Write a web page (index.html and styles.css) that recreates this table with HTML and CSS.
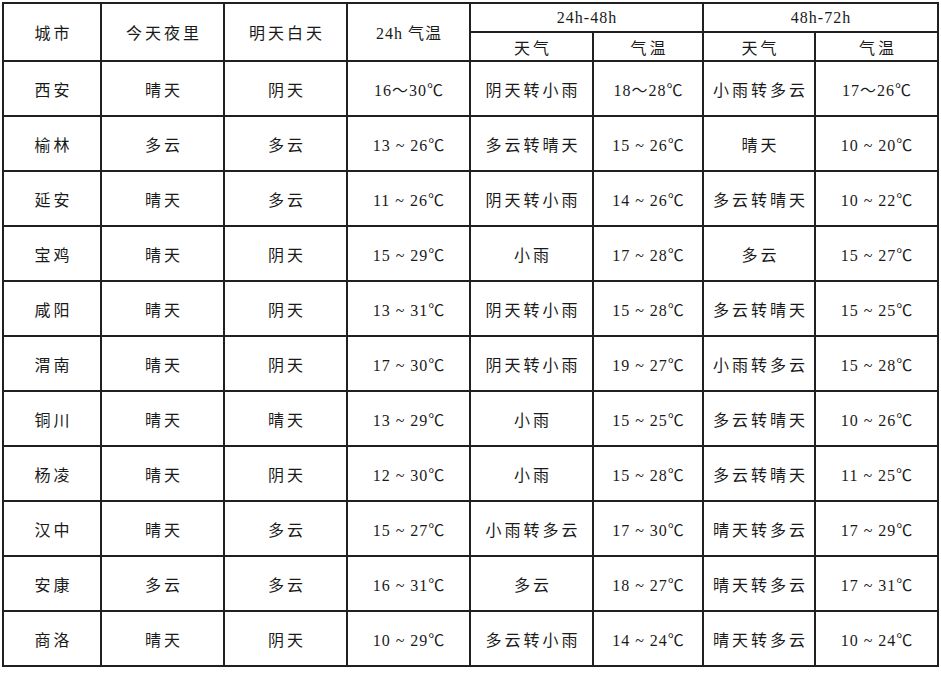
FILE: index.html
```html
<!DOCTYPE html>
<html lang="zh">
<head>
<meta charset="utf-8">
<title>陕西天气预报</title>
<link rel="stylesheet" href="styles.css">
</head>
<body>
<div class="wrap">
<table class="fc">
  <colgroup>
    <col class="c-city">
    <col class="c-w">
    <col class="c-w">
    <col class="c-w">
    <col class="c-w">
    <col class="c-t">
    <col class="c-w2">
    <col class="c-w3">
  </colgroup>
  <thead>
    <tr class="h1">
      <th rowspan="2">城市</th>
      <th rowspan="2">今天夜里</th>
      <th rowspan="2">明天白天</th>
      <th rowspan="2" class="num">24h 气温</th>
      <th colspan="2" class="num">24h-48h</th>
      <th colspan="2" class="num">48h-72h</th>
    </tr>
    <tr class="h2">
      <th>天气</th>
      <th>气温</th>
      <th>天气</th>
      <th>气温</th>
    </tr>
  </thead>
  <tbody>
    <tr><td>西安</td><td>晴天</td><td>阴天</td><td class="num">16～30℃</td><td>阴天转小雨</td><td class="num">18～28℃</td><td>小雨转多云</td><td class="num">17～26℃</td></tr>
    <tr><td>榆林</td><td>多云</td><td>多云</td><td class="num">13 ~ 26℃</td><td>多云转晴天</td><td class="num">15 ~ 26℃</td><td>晴天</td><td class="num">10 ~ 20℃</td></tr>
    <tr><td>延安</td><td>晴天</td><td>多云</td><td class="num">11 ~ 26℃</td><td>阴天转小雨</td><td class="num">14 ~ 26℃</td><td>多云转晴天</td><td class="num">10 ~ 22℃</td></tr>
    <tr><td>宝鸡</td><td>晴天</td><td>阴天</td><td class="num">15 ~ 29℃</td><td>小雨</td><td class="num">17 ~ 28℃</td><td>多云</td><td class="num">15 ~ 27℃</td></tr>
    <tr><td>咸阳</td><td>晴天</td><td>阴天</td><td class="num">13 ~ 31℃</td><td>阴天转小雨</td><td class="num">15 ~ 28℃</td><td>多云转晴天</td><td class="num">15 ~ 25℃</td></tr>
    <tr><td>渭南</td><td>晴天</td><td>阴天</td><td class="num">17 ~ 30℃</td><td>阴天转小雨</td><td class="num">19 ~ 27℃</td><td>小雨转多云</td><td class="num">15 ~ 28℃</td></tr>
    <tr><td>铜川</td><td>晴天</td><td>晴天</td><td class="num">13 ~ 29℃</td><td>小雨</td><td class="num">15 ~ 25℃</td><td>多云转晴天</td><td class="num">10 ~ 26℃</td></tr>
    <tr><td>杨凌</td><td>晴天</td><td>阴天</td><td class="num">12 ~ 30℃</td><td>小雨</td><td class="num">15 ~ 28℃</td><td>多云转晴天</td><td class="num">11 ~ 25℃</td></tr>
    <tr><td>汉中</td><td>晴天</td><td>多云</td><td class="num">15 ~ 27℃</td><td>小雨转多云</td><td class="num">17 ~ 30℃</td><td>晴天转多云</td><td class="num">17 ~ 29℃</td></tr>
    <tr><td>安康</td><td>多云</td><td>多云</td><td class="num">16 ~ 31℃</td><td>多云</td><td class="num">18 ~ 27℃</td><td>晴天转多云</td><td class="num">17 ~ 31℃</td></tr>
    <tr><td>商洛</td><td>晴天</td><td>阴天</td><td class="num">10 ~ 29℃</td><td>多云转小雨</td><td class="num">14 ~ 24℃</td><td>晴天转多云</td><td class="num">10 ~ 24℃</td></tr>
  </tbody>
</table>
</div>
</body>
</html>
```
FILE: styles.css
```css
html, body {
  margin: 0;
  padding: 0;
  background: #ffffff;
}

.wrap {
  padding: 2px 0 0 2px;
}

.fc {
  border-collapse: collapse;
  table-layout: fixed;
  width: 936px;
  font-family: "Liberation Serif", "Noto Sans CJK SC", serif;
  font-size: 16px;
  color: #1a1a1a;
}

.c-city { width: 98px; }
.c-w { width: 123px; }
.c-t { width: 110px; }
.c-w2 { width: 112px; }
.c-w3 { width: 123px; }

.fc th,
.fc td {
  border: 2px solid #202020;
  text-align: center;
  vertical-align: middle;
  padding: 0 0 0 3px;
  letter-spacing: 3px;
  font-weight: normal;
  white-space: nowrap;
  overflow: hidden;
}

.fc td.num,
.fc th.num {
  letter-spacing: 1px;
  padding-left: 1px;
}

.h1 th { height: 27px; }
.h2 th { height: 27px; }

.fc tbody td { height: 53px; }
```
